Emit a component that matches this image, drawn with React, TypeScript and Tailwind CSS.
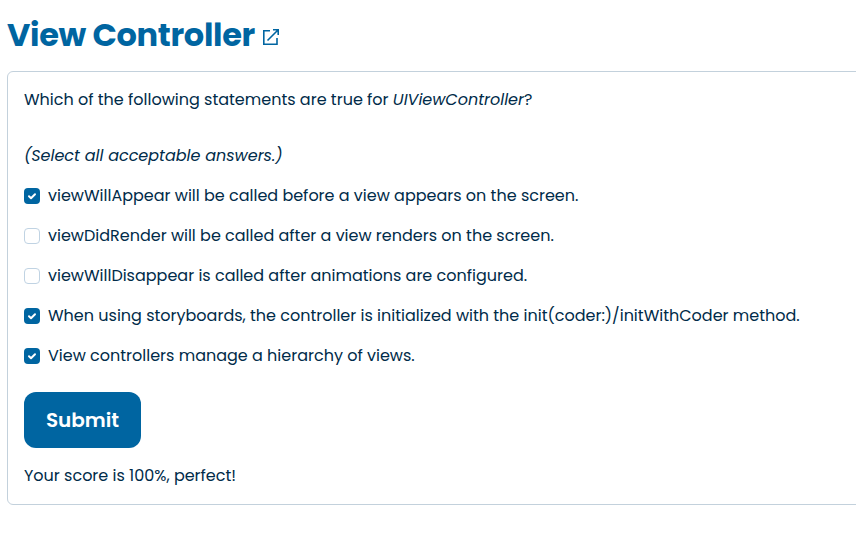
const options = [
  { text: 'viewWillAppear will be called before a view appears on the screen.', checked: true },
  { text: 'viewDidRender will be called after a view renders on the screen.', checked: false },
  { text: 'viewWillDisappear is called after animations are configured.', checked: false },
  { text: 'When using storyboards, the controller is initialized with the init(coder:)/initWithCoder method.', checked: true },
  { text: 'View controllers manage a hierarchy of views.', checked: true },
];

function Checkbox({ checked }: { checked: boolean }) {
  return checked ? (
    <span className="flex size-4 shrink-0 items-center justify-center rounded bg-[#0065a1]">
      <svg width="16" height="16" viewBox="0 0 16 16" fill="none" stroke="white" strokeWidth="2" strokeLinecap="round" strokeLinejoin="round">
        <path d="M5 8.3L7 10.2L11 6.2" />
      </svg>
    </span>
  ) : (
    <span className="size-4 shrink-0 rounded border border-[#c0d3e3] bg-white" />
  );
}

export default function App() {
  return (
    <main className="h-[549px] w-full overflow-hidden bg-white pl-[7px] pt-[11px] font-['Poppins','Inter',sans-serif] text-base text-[#002b49] antialiased">
      <header className="flex h-12 items-center text-[#0065a1]">
        <h1 className="whitespace-nowrap text-[32px] leading-[48px] font-bold tracking-[-0.01em]">View Controller</h1>
        <svg className="mt-1 ml-[7px]" width="18" height="18" viewBox="0 0 18 18" fill="none" stroke="currentColor" strokeWidth="1.6">
          <path d="M8 2.8H1.8V16.2H15V10M11 1.8H16.2V7M16.2 1.8L5.5 12.5" />
        </svg>
      </header>
      <section className="mt-3 h-[434px] w-[900px] rounded-md border border-[#c3d1dc] px-4 pt-4">
        <p className="h-6 leading-6">
          Which of the following statements are true for <em>UIViewController</em>?
        </p>
        <p className="mt-8 h-6 leading-6 italic">(Select all acceptable answers.)</p>
        <div className="mt-4 flex flex-col gap-4">
          {options.map((o) => (
            <label key={o.text} className="flex h-6 items-center gap-2 whitespace-nowrap leading-6">
              <Checkbox checked={o.checked} />
              <span>{o.text}</span>
            </label>
          ))}
        </div>
        <button className="mt-6 flex h-14 w-[117px] items-center justify-center rounded-xl bg-[#0065a1] text-xl font-semibold text-white">
          Submit
        </button>
        <p className="mt-4 h-6 leading-6">Your score is 100%, perfect!</p>
      </section>
    </main>
  );
}
